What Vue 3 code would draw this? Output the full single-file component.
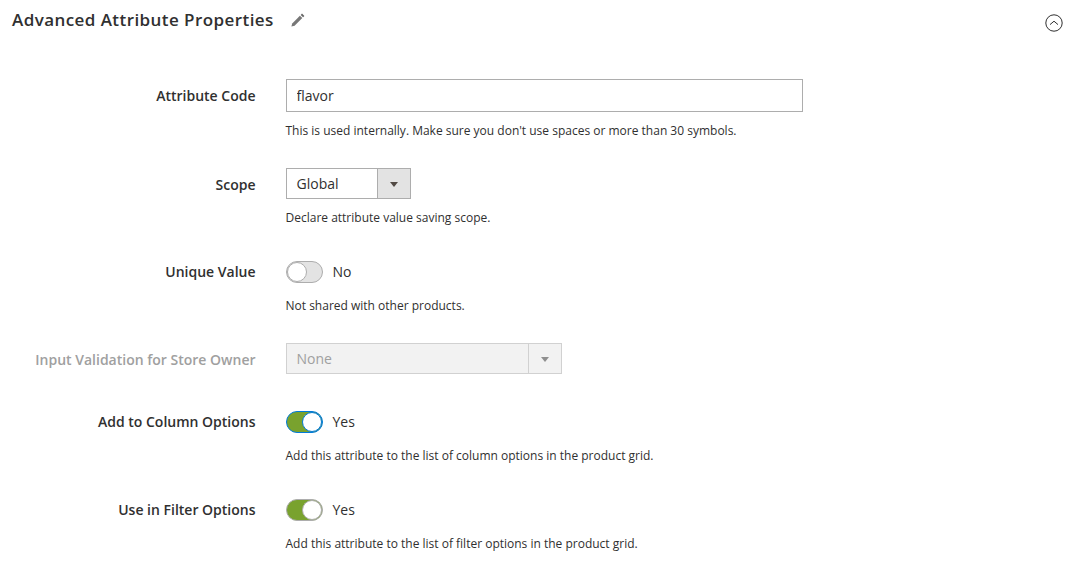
<script setup>
const fields = [
  { label: 'Attribute Code', type: 'input', value: 'flavor', note: "This is used internally. Make sure you don't use spaces or more than 30 symbols.", cls: 'row-code' },
  { label: 'Scope', type: 'select', value: 'Global', note: 'Declare attribute value saving scope.', cls: 'row-scope' },
  { label: 'Unique Value', type: 'toggle', on: false, value: 'No', note: 'Not shared with other products.', cls: 'row-unique' },
  { label: 'Input Validation for Store Owner', type: 'select', value: 'None', disabled: true, cls: 'row-validation' },
  { label: 'Add to Column Options', type: 'toggle', on: true, focused: true, value: 'Yes', note: 'Add this attribute to the list of column options in the product grid.', cls: 'row-column' },
  { label: 'Use in Filter Options', type: 'toggle', on: true, value: 'Yes', note: 'Add this attribute to the list of filter options in the product grid.', cls: 'row-filter' }
]
</script>

<template>
  <section class="section">
    <header class="section-header">
      <h2>Advanced Attribute Properties</h2>
      <svg class="pencil" width="16" height="16" viewBox="0 0 16 16">
        <path d="M12 1.6l2.4 2.4-1.3 1.3-2.4-2.4z" fill="#666" />
        <path d="M9.9 3.7l2.4 2.4-7.7 7.7-3.2.8.8-3.2z" fill="#777" />
      </svg>
      <svg class="collapse" width="18" height="18" viewBox="0 0 18 18" fill="none" stroke="#303030">
        <circle cx="9" cy="9" r="8.2" />
        <path d="M5 10.6l4-3.4 4 3.4" />
      </svg>
    </header>

    <div class="form">
      <div
        v-for="field in fields"
        :key="field.label"
        class="field"
        :class="[field.cls, { disabled: field.disabled }]"
      >
        <label class="field-label">{{ field.label }}</label>
        <div class="field-control">
          <input v-if="field.type === 'input'" class="text-input" type="text" :value="field.value">

          <div v-else-if="field.type === 'select'" class="select">
            <span class="select-value">{{ field.value }}</span>
            <span class="select-arrow"><i></i></span>
          </div>

          <div v-else class="toggle-wrap">
            <span class="toggle" :class="{ on: field.on, focused: field.focused }"><i></i></span>
            <span class="toggle-text">{{ field.value }}</span>
          </div>

          <p v-if="field.note" class="note">{{ field.note }}</p>
        </div>
      </div>
    </div>
  </section>
</template>

<style>
body {
  background: #fff;
}
</style>

<style scoped>
.section {
  width: 1077px;
  height: 564px;
  overflow: hidden;
  font-family: "Open Sans", sans-serif;
  color: #303030;
  font-size: 14px;
}

.section-header {
  display: flex;
  align-items: center;
  height: 38px;
  padding: 0 14px 0 12px;
}

.section-header h2 {
  margin: 0;
  font-size: 17px;
  font-weight: 600;
  letter-spacing: 0.43px;
  color: #303030;
}

.pencil {
  margin-left: 16px;
  margin-top: 2px;
}

.collapse {
  margin-left: auto;
  margin-top: 8px;
}

.form {
  padding-top: 41px;
}

.field {
  display: flex;
}

.field-label {
  width: 255.5px;
  flex: none;
  text-align: right;
  font-weight: 600;
  line-height: 33px;
}

.field-control {
  margin-left: 30px;
}

.row-code { height: 89px; }
.row-scope { height: 87px; }
.row-unique { height: 88px; }
.row-validation { height: 62px; }
.row-column { height: 88px; }

.row-unique .field-label,
.row-column .field-label,
.row-filter .field-label {
  line-height: 11px;
  padding-top: 11px;
}

.disabled .field-label {
  color: #a0a0a0;
  line-height: 33px;
}

.text-input {
  display: block;
  box-sizing: border-box;
  width: 517px;
  height: 33px;
  padding: 0 10px;
  border: 1px solid #adadad;
  font: 14px "Open Sans", sans-serif;
  color: #303030;
  outline: none;
}

.select {
  display: flex;
  box-sizing: border-box;
  width: 125px;
  height: 31px;
  border: 1px solid #adadad;
}

.select-value {
  flex: 1;
  padding-left: 10px;
  line-height: 29px;
}

.select-arrow {
  width: 32px;
  display: flex;
  align-items: center;
  justify-content: center;
  background: #e3e3e3;
  border-left: 1px solid #adadad;
}

.select-arrow i {
  border-top: 5px solid #514943;
  border-left: 4px solid transparent;
  border-right: 4px solid transparent;
  margin-top: 2px;
}

.disabled .select {
  width: 276px;
  background: #f2f2f2;
  border-color: #d1d1d1;
  color: #a0a0a0;
}

.disabled .select-arrow {
  background: #f2f2f2;
  border-left-color: #d1d1d1;
}

.disabled .select-arrow i {
  border-top-color: #8f8f8f;
}

.note {
  margin: 11px 0 0;
  font-size: 12px;
  line-height: 16px;
  color: #303030;
}

.toggle-wrap {
  display: flex;
  align-items: center;
  height: 22px;
  margin-top: 6px;
}

.toggle {
  box-sizing: border-box;
  display: block;
  position: relative;
  width: 37px;
  height: 22px;
  border: 1px solid #adadad;
  border-radius: 11px;
  background: #e3e3e3;
}

.toggle i {
  position: absolute;
  top: 0;
  left: 0;
  box-sizing: border-box;
  width: 20px;
  height: 20px;
  border-radius: 50%;
  background: #fff;
  border: 1px solid #adadad;
}

.toggle.on {
  background: #79a22e;
}

.toggle.on i {
  left: 15px;
}

.toggle.focused {
  border-color: #007bdb;
}

.toggle.focused i {
  border-color: #007bdb;
}

.toggle-text {
  margin-left: 10px;
  margin-bottom: 2px;
}

.row-unique .note,
.row-column .note,
.row-filter .note {
  margin-top: 15px;
}
</style>
